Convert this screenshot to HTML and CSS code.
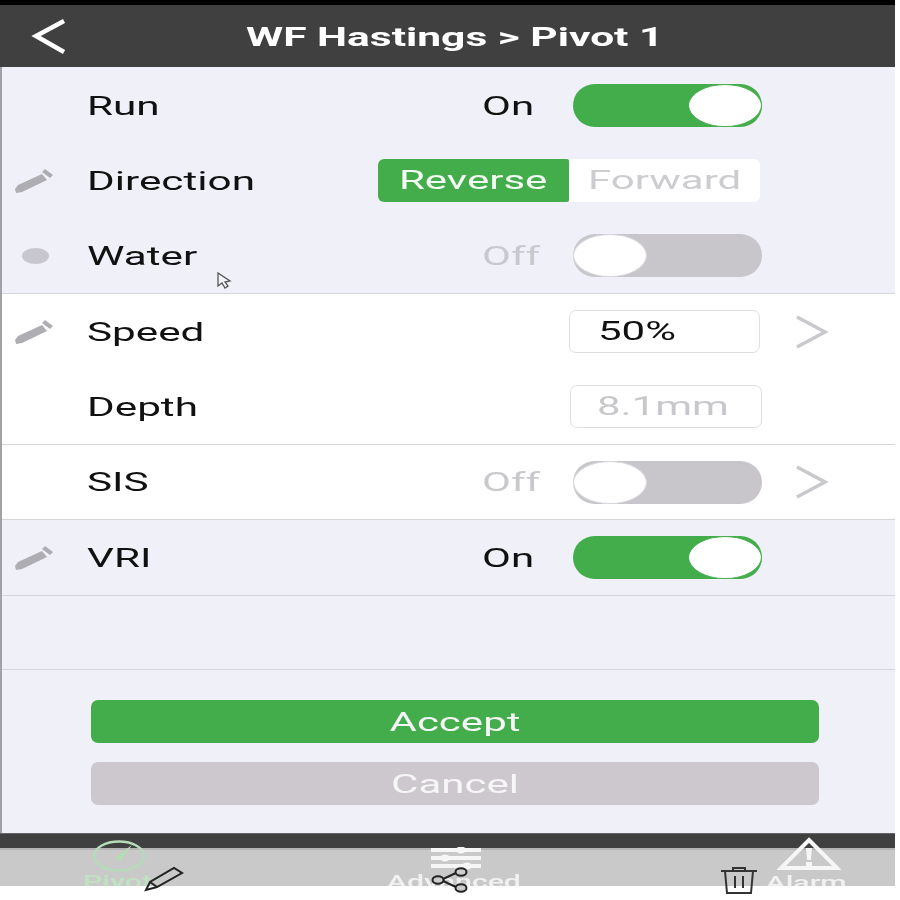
FILE: index.html

```html
<!DOCTYPE html>
<html lang="en">
<head>
  <meta charset="UTF-8">
  <meta name="viewport" content="width=device-width, initial-scale=1.0">
  <title>WF Hastings &gt; Pivot 1</title>
  <link rel="stylesheet" href="styles.css">
</head>
<body>
  <div class="screen">
    <header class="topbar">
      <svg class="back-icon" width="40" height="40" viewBox="0 0 40 40"><path d="M33 3 L5 18 L33 34" fill="none" stroke="#fff" stroke-width="4.5"/></svg>
      <h1 class="title"><span class="wide">WF Hastings &gt; Pivot 1</span></h1>
    </header>

    <main class="content">
      <section class="group">
        <div class="row">
          <div class="row-icon"></div>
          <div class="label"><span class="wide">Run</span></div>
          <div class="state"><span class="wide">On</span></div>
          <div class="toggle on"><div class="knob"></div></div>
        </div>
        <div class="row">
          <div class="row-icon">
            <svg width="40" height="26" viewBox="0 0 40 26"><path d="M1 21 L4 17 L28 6 L33 12 L8 24 L2 25 Z M31 1 L39 7 L36 10 L28 4 Z" fill="#aeaeb2"/></svg>
          </div>
          <div class="label"><span class="wide">Direction</span></div>
          <div class="segment">
            <div class="seg-item active"><span class="wide-c">Reverse</span></div>
            <div class="seg-item"><span class="wide-c">Forward</span></div>
          </div>
        </div>
        <div class="row">
          <div class="row-icon"><div class="dot"></div></div>
          <div class="label"><span class="wide">Water</span></div>
          <div class="state muted"><span class="wide">Off</span></div>
          <div class="toggle"><div class="knob"></div></div>
          <svg class="cursor" width="18" height="18" viewBox="0 0 18 18"><path d="M1 1 V14 L5 11 L8 16 L11 14 L8 10 L13 9 Z" fill="#f4f4f8" stroke="#555" stroke-width="1.3"/></svg>
        </div>
      </section>

      <section class="group white">
        <div class="row">
          <div class="row-icon">
            <svg width="40" height="26" viewBox="0 0 40 26"><path d="M1 21 L4 17 L28 6 L33 12 L8 24 L2 25 Z M31 1 L39 7 L36 10 L28 4 Z" fill="#aeaeb2"/></svg>
          </div>
          <div class="label"><span class="wide">Speed</span></div>
          <div class="input"><span class="wide">50%</span></div>
          <svg class="chevron" width="36" height="34" viewBox="0 0 36 34"><path d="M2 2 L30 17 L2 32" fill="none" stroke="#c9c9cd" stroke-width="3.5"/></svg>
        </div>
        <div class="row">
          <div class="row-icon"></div>
          <div class="label"><span class="wide">Depth</span></div>
          <div class="input disabled"><span class="wide">8.1mm</span></div>
        </div>
      </section>

      <section class="group white">
        <div class="row short">
          <div class="row-icon"></div>
          <div class="label"><span class="wide">SIS</span></div>
          <div class="state muted"><span class="wide">Off</span></div>
          <div class="toggle"><div class="knob"></div></div>
          <svg class="chevron" width="36" height="34" viewBox="0 0 36 34"><path d="M2 2 L30 17 L2 32" fill="none" stroke="#c9c9cd" stroke-width="3.5"/></svg>
        </div>
      </section>

      <section class="group">
        <div class="row">
          <div class="row-icon">
            <svg width="40" height="26" viewBox="0 0 40 26"><path d="M1 21 L4 17 L28 6 L33 12 L8 24 L2 25 Z M31 1 L39 7 L36 10 L28 4 Z" fill="#aeaeb2"/></svg>
          </div>
          <div class="label"><span class="wide">VRI</span></div>
          <div class="state"><span class="wide">On</span></div>
          <div class="toggle on"><div class="knob"></div></div>
        </div>
      </section>

      <section class="group spacer"></section>

      <section class="actions">
        <button class="btn accept"><span class="wide-c">Accept</span></button>
        <button class="btn cancel"><span class="wide-c">Cancel</span></button>
      </section>
    </main>

    <footer class="bottom">
      <div class="tabs-top"></div>
      <nav class="tabs">
        <div class="tab pivot"><span class="wide-c">Pivot</span></div>
        <div class="tab"><span class="wide-c">Advanced</span></div>
        <div class="tab alarm-tab"><span class="wide-c">Alarm</span></div>
      </nav>

      <svg class="tab-icon gauge" width="54" height="32" viewBox="0 0 54 32"><ellipse cx="27" cy="16" rx="25" ry="14.5" fill="none" stroke="#b4dcb6" stroke-width="2.5"/><path d="M22 18 L40 5 L28 21 Z" fill="#b4dcb6"/></svg>
      <svg class="tab-icon sliders" width="50" height="24" viewBox="0 0 50 24"><path d="M0 3 H50 M0 11 H50 M0 19 H50" stroke="#f6f6f6" stroke-width="4"/><ellipse cx="30" cy="3" rx="5" ry="3.5" fill="#f6f6f6"/><ellipse cx="14" cy="11" rx="5" ry="3.5" fill="#f6f6f6"/><ellipse cx="36" cy="19" rx="5" ry="3.5" fill="#f6f6f6"/></svg>
      <svg class="tab-icon alarm" width="64" height="34" viewBox="0 0 64 34"><path d="M32 3 L60 31 H4 Z" fill="none" stroke="#f6f6f6" stroke-width="4"/><path d="M29 11 H35 L34 23 H30 Z M29 25 H35 V29 H29 Z" fill="#f6f6f6"/></svg>

      <svg class="tool-icon pencil" width="40" height="26" viewBox="0 0 40 26"><path d="M2 24 L6 16 L30 2 L38 7 L13 21 Z M6 16 L13 21" fill="none" stroke="#222" stroke-width="2"/></svg>
      <svg class="tool-icon share" width="38" height="26" viewBox="0 0 38 26"><path d="M10 13 L27 5 M10 13 L27 21" stroke="#222" stroke-width="2"/><ellipse cx="7" cy="13" rx="5.5" ry="3.8" fill="#ccc" stroke="#222" stroke-width="2"/><ellipse cx="30" cy="5" rx="5.5" ry="3.8" fill="#ccc" stroke="#222" stroke-width="2"/><ellipse cx="30" cy="21" rx="5.5" ry="3.8" fill="#ccc" stroke="#222" stroke-width="2"/></svg>
      <svg class="tool-icon trash" width="38" height="28" viewBox="0 0 38 28"><path d="M1 5 H37 M13 5 V2 H25 V5 M5 5 L7 27 H31 L33 5 M15 10 V22 M23 10 V22" fill="none" stroke="#333" stroke-width="2"/></svg>
    </footer>
  </div>
</body>
</html>
```

FILE: styles.css

```css
* {
  margin: 0;
  padding: 0;
  box-sizing: border-box;
}
body {
  width: 900px;
  height: 900px;
  background-color: #fff;
  overflow: hidden;
  font-family: Roboto, 'Liberation Sans', Arial, sans-serif;
}
.screen {
  width: 895px;
  padding-top: 5px;
  background: linear-gradient(#000, #000) top left / 100% 5px no-repeat;
}

/* the source is stretched sideways, text follows it */
.wide, .wide-c {
  display: inline-block;
  white-space: nowrap;
  transform: scaleX(1.68);
  filter: blur(0.4px);
}
.wide { transform-origin: left center; }
.wide-c { transform-origin: center; }

.topbar {
  position: relative;
  height: 62px;
  background-color: #404040;
  display: flex;
  justify-content: center;
  align-items: center;
}
.back-icon {
  position: absolute;
  left: 31px;
  top: 13px;
}
.title {
  font-size: 25px;
  font-weight: 700;
  color: #fff;
  width: 414px;
  margin-left: 11px;
  padding-top: 2px;
}
.title .wide { transform: scaleX(1.7); }

.content {
  background-color: #eff0f8;
  border-left: 2px solid #a2a2a6;
  height: 766px;
}
.group {
  border-bottom: 1px solid #d6d6da;
}
.group:first-child { padding-top: 1px; }
.group.white { background-color: #fff; }
.group.spacer { height: 74px; }

.row {
  position: relative;
  height: 75px;
  display: grid;
  grid-template-columns: 85px 1fr 90px 190px 132px;
  align-items: center;
  font-size: 25px;
  color: #111;
}
.row.short { height: 74px; }
.row-icon {
  display: flex;
  justify-content: center;
  padding-right: 22px;
  padding-top: 1px;
}
.row-icon svg { filter: blur(0.4px); }
.dot {
  width: 27px;
  height: 16px;
  border-radius: 50%;
  background-color: #c9c7ce;
  margin-left: 4px;
}
.label {
  grid-column: 2;
  padding-top: 1px;
}
.label .wide { transform: scaleX(1.69); }
.state {
  grid-column: 3;
  padding-top: 1px;
  margin-left: -1px;
}
.state.muted { color: #c9c9cd; }

.toggle {
  grid-column: 4;
  height: 43px;
  width: 189px;
  border-radius: 22px / 22px;
  background-color: #c9c6cb;
  display: flex;
}
.toggle.on {
  background-color: #43ad4b;
  justify-content: flex-end;
}
.knob {
  width: 74px;
  height: 43px;
  border-radius: 50%;
  background-color: #fff;
  border: 1px solid #d8d8dc;
}
.toggle.on .knob { border-color: #43ad4b; }

.segment {
  grid-column: 3 / 5;
  justify-self: end;
  margin-right: 3px;
  width: 382px;
  height: 43px;
  display: grid;
  grid-template-columns: 1fr 1fr;
  background-color: #fff;
  border-radius: 6px;
  color: #cdcdd1;
}
.seg-item {
  display: flex;
  justify-content: center;
  align-items: center;
}
.seg-item.active {
  background-color: #43ad4b;
  color: #f4fbf4;
  border-radius: 6px 2px 2px 6px;
}

.input {
  grid-column: 4;
  width: 191px;
  height: 43px;
  margin-left: -4px;
  padding-left: 28px;
  border: 1px solid #dfdfe3;
  border-radius: 7px;
  background-color: #fff;
  line-height: 41px;
}
.input.disabled {
  width: 192px;
  margin-left: -3px;
  padding-left: 26px;
  color: #c8c8cc;
}
.chevron {
  grid-column: 5;
  margin-left: 32px;
}
.cursor {
  position: absolute;
  left: 215px;
  top: 54px;
}

.actions {
  padding: 30px 76px 0 89px;
  display: flex;
  flex-direction: column;
  gap: 19px;
}
.btn {
  height: 43px;
  border: none;
  border-radius: 7px;
  padding-top: 2px;
  font-family: inherit;
  font-size: 25px;
  color: #f6f6f6;
}
.btn.accept { background-color: #43ad4b; }
.btn.cancel { background-color: #cdc8cd; }

.bottom {
  position: relative;
  height: 53px;
}
.tabs-top {
  height: 15px;
  background-color: #404040;
  border-top: 1px solid #666;
}
.tabs {
  height: 38px;
  border-top: 2px solid #b4b4b4;
  background-color: #c9c9c9;
  overflow: hidden;
  display: grid;
  grid-template-columns: 236px 436px 1fr;
  font-size: 18px;
  color: #f1f1f1;
  font-weight: 500;
}
.tab {
  text-align: center;
  padding-top: 21px;
}
.tab.pivot { color: #bfe3c2; }
.tab.alarm-tab {
  padding-left: 46px;
  padding-top: 22px;
}
.tab-icon, .tool-icon { position: absolute; }
.gauge { left: 92px; top: 7px; }
.sliders { left: 431px; top: 14px; }
.alarm { left: 777px; top: 4px; }
.pencil { left: 144px; top: 33px; }
.share { left: 431px; top: 34px; }
.trash { left: 720px; top: 33px; }
```
